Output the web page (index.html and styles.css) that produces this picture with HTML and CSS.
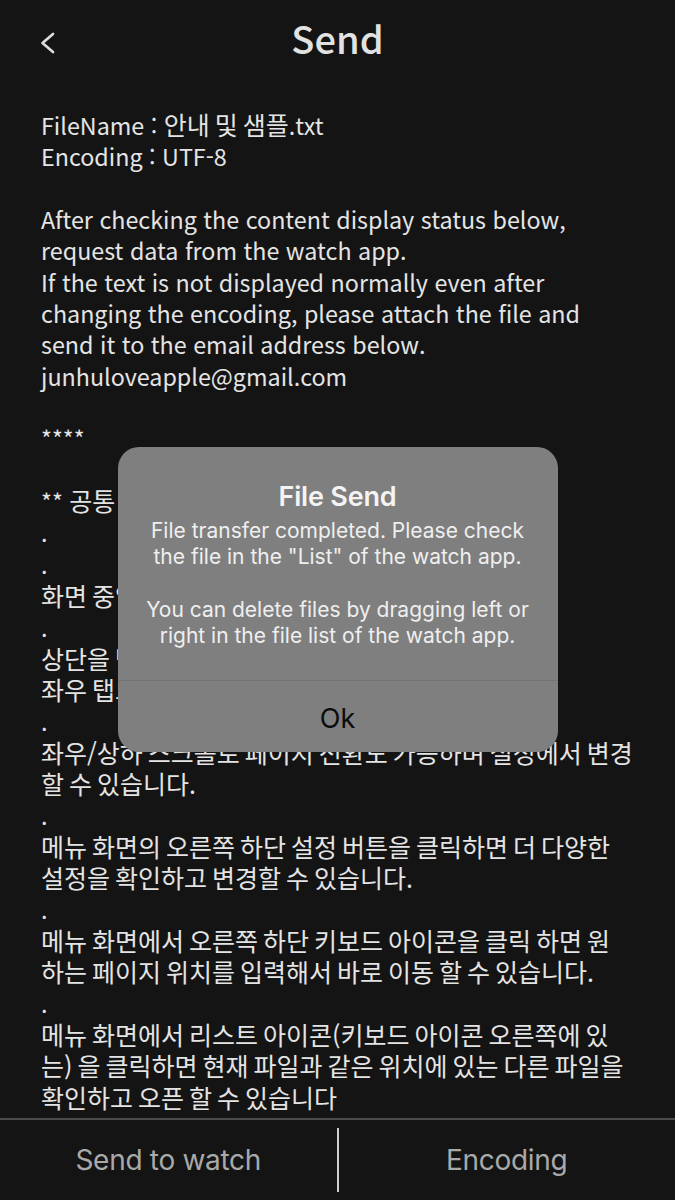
FILE: index.html
```
<!DOCTYPE html>
<html lang="ko">
<head>
<meta charset="utf-8">
<title>Send</title>
<link rel="stylesheet" href="styles.css">
</head>
<body>
<div class="app">
  <header class="topbar">
    <button class="back" aria-label="Back">
      <svg width="18" height="24" viewBox="0 0 18 24"><polyline points="15,3 4.5,12 15,21" fill="none" stroke="#dcdcdc" stroke-width="2.7" stroke-linecap="round" stroke-linejoin="round"/></svg>
    </button>
    <h1 class="title">Send</h1>
  </header>
  <main class="content"><div class="filetext"><div class="ln">FileName : <span class="ko">안내 및 샘플</span>.txt</div><div class="ln">Encoding : UTF-8</div><div class="ln"> </div><div class="ln">After checking the content display status below,</div><div class="ln">request data from the watch app.</div><div class="ln">If the text is not displayed normally even after</div><div class="ln">changing the encoding, please attach the file and</div><div class="ln">send it to the email address below.</div><div class="ln">junhuloveapple@gmail.com</div><div class="ln"> </div><div class="ln">****</div><div class="ln"> </div><div class="ln">** <span class="ko">공통 기능</span> **</div><div class="ln">.</div><div class="ln">.</div><div class="ln ko">화면 중앙을 탭하면 메뉴 화면이 표시됩니다.</div><div class="ln">.</div><div class="ln ko">상단을 탭하면 메뉴가 표시되고</div><div class="ln ko">좌우 탭으로 페이지를 이동할 수 있습니다.</div><div class="ln">.</div><div class="ln ko">좌우/상하 스크롤로 페이지 전환도 가능하며 설정에서 변경</div><div class="ln ko">할 수 있습니다.</div><div class="ln">.</div><div class="ln ko">메뉴 화면의 오른쪽 하단 설정 버튼을 클릭하면 더 다양한</div><div class="ln ko">설정을 확인하고 변경할 수 있습니다.</div><div class="ln">.</div><div class="ln ko">메뉴 화면에서 오른쪽 하단 키보드 아이콘을 클릭 하면 원</div><div class="ln ko">하는 페이지 위치를 입력해서 바로 이동 할 수 있습니다.</div><div class="ln">.</div><div class="ln ko">메뉴 화면에서 리스트 아이콘(키보드 아이콘 오른쪽에 있</div><div class="ln ko">는) 을 클릭하면 현재 파일과 같은 위치에 있는 다른 파일을</div><div class="ln ko">확인하고 오픈 할 수 있습니다</div><div class="ln">.</div><div class="ln ko">텍스트 파일의 내용을 워치 앱으로 전송할 수 있습니다.</div></div></main>
  <footer class="bottombar">
    <button class="barbtn">Send to watch</button>
    <span class="divider"></span>
    <button class="barbtn">Encoding</button>
  </footer>

  <div class="alert" role="alertdialog">
    <div class="alert-body">
      <h2 class="alert-title">File Send</h2>
      <p class="alert-msg">File transfer completed. Please check the file in the "List" of the watch app.

You can delete files by dragging left or right in the file list of the watch app.</p>
    </div>
    <button class="alert-btn">Ok</button>
  </div>
</div>
</body>
</html>
```
FILE: styles.css
```
html, body {
  margin: 0;
  padding: 0;
  background: #141414;
}
body {
  width: 675px;
  height: 1200px;
  overflow: hidden;
  font-family: "Noto Sans CJK KR", "Noto Sans", sans-serif;
}
.app {
  position: relative;
  width: 675px;
  height: 1200px;
  display: flex;
  flex-direction: column;
}
.topbar {
  height: 76px;
  flex: none;
  display: flex;
  align-items: center;
  justify-content: center;
  position: relative;
}
.back {
  position: absolute;
  left: 38px;
  top: 31px;
  padding: 0;
  margin: 0;
  border: 0;
  background: none;
  display: flex;
}
.title {
  margin: 0;
  font-size: 38px;
  font-weight: 500;
  color: #e2e2e2;
  line-height: 1;
}
.content {
  flex: 1;
  overflow: hidden;
  padding: 34px 16px 0 41px;
}
.filetext {
  font-size: 23.3px;
  color: #e4e4e4;
}
.ln {
  height: 31.35px;
  line-height: 31.35px;
  white-space: pre;
}
.ko {
  font-size: 25px;
  word-spacing: -2px;
}
span.ko {
  line-height: 1;
}
.bottombar {
  flex: none;
  height: 80px;
  border-top: 2px solid #4b4b4b;
  display: flex;
  align-items: center;
}
.barbtn {
  flex: 1;
  height: 100%;
  border: 0;
  background: none;
  padding: 0;
  font-family: "Inter", "Roboto", sans-serif;
  font-size: 28px;
  font-weight: 400;
  letter-spacing: -0.3px;
  color: #a9a9a9;
}
.divider {
  width: 2px;
  height: 64px;
  background: #cfcfcf;
  flex: none;
}
.alert {
  position: absolute;
  top: 447px;
  left: 50%;
  margin-left: -220px;
  width: 440px;
  background: #7f7f7f;
  border-radius: 21px;
  overflow: hidden;
  font-family: "Inter", "Roboto", sans-serif;
  text-align: center;
}
.alert-body {
  padding: 33px 22px 31px;
}
.alert-title {
  margin: 0;
  font-size: 27px;
  line-height: 34px;
  font-weight: 600;
  color: #f4f4f4;
  letter-spacing: -0.2px;
}
.alert-msg {
  margin: 4px 0 0;
  white-space: pre-wrap;
  font-size: 21px;
  line-height: 26.3px;
  color: #efefef;
}
.alert-btn {
  display: block;
  width: 100%;
  height: 72px;
  border: 0;
  border-top: 1px solid #737373;
  background: none;
  padding: 4px 0 0;
  font-family: "Inter", "Roboto", sans-serif;
  font-size: 27px;
  color: #0b0b0b;
}
```
